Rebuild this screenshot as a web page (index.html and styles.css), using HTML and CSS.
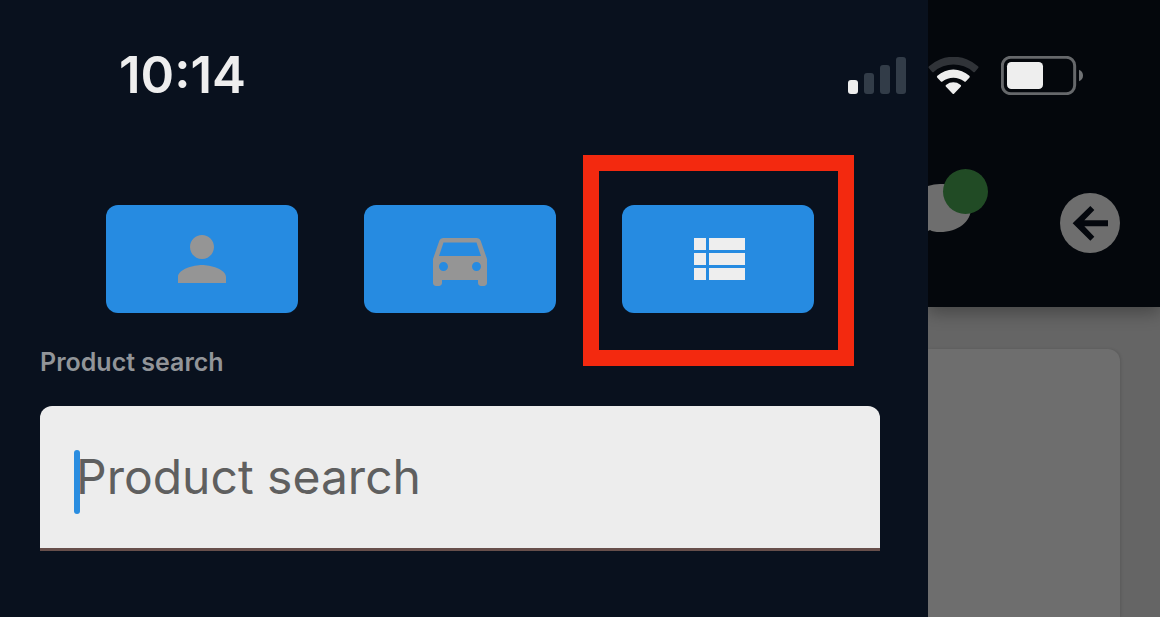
FILE: index.html
```html
<!DOCTYPE html>
<html lang="en">
<head>
<meta charset="utf-8">
<meta name="viewport" content="width=device-width, initial-scale=1">
<title>Product search</title>
<link rel="stylesheet" href="styles.css">
</head>
<body>
<div class="screen">
  <aside class="drawer">
    <nav class="tabs" aria-label="Search type">
      <button class="tab" type="button" aria-label="People">
        <svg class="tab-icon" viewBox="0 0 24 24"><path d="M12 12c2.210 0 4-1.790 4-4s-1.790-4-4-4-4 1.790-4 4 1.790 4 4 4zm0 2c-2.670 0-8 1.340-8 4v2h16v-2c0-2.660-5.330-4-8-4z"/></svg>
      </button>
      <button class="tab" type="button" aria-label="Vehicles">
        <svg class="tab-icon" viewBox="0 0 24 24"><path d="M18.920 6.010C18.720 5.420 18.160 5 17.500 5h-11c-.660 0-1.210.420-1.420 1.010L3 12v8c0 .550.450 1 1 1h1c.550 0 1-.450 1-1v-1h12v1c0 .550.450 1 1 1h1c.550 0 1-.450 1-1v-8l-2.080-5.990zM6.500 16c-.830 0-1.500-.670-1.500-1.500S5.670 13 6.500 13s1.500.670 1.500 1.500S7.330 16 6.500 16zm11 0c-.830 0-1.500-.670-1.500-1.500s.670-1.500 1.500-1.500 1.500.670 1.500 1.500-.670 1.500-1.500 1.500zM5 11l1.500-4.500h11L19 11H5z"/></svg>
      </button>
      <button class="tab tab-active" type="button" aria-label="Products">
        <svg class="tab-icon" viewBox="0 0 24 24"><path d="M4 14h4v-4H4v4zm0 5h4v-4H4v4zM4 9h4V5H4v4zm5 5h12v-4H9v4zm0 5h12v-4H9v4zM9 5v4h12V5H9z"/></svg>
        <span class="highlight"></span>
      </button>
    </nav>
    <label class="label" for="search">Product search</label>
    <div class="field">
      <input class="input" id="search" type="text" placeholder="Product search">
      <span class="caret"></span>
    </div>
  </aside>

  <main class="page">
    <header class="header">
      <button class="chat" type="button" aria-label="Messages">
        <svg class="chat-icon" viewBox="0 0 60 63">
          <path fill="#6e6e6e" d="M0 17Q6 15 12 15C30 15 43 25 43 39S30 63 12 63Q5 63 2 61L0 62Z"/>
          <circle cx="37.500" cy="22.500" r="22.500" fill="#214b25"/>
        </svg>
      </button>
      <button class="back" type="button" aria-label="Back">
        <svg class="back-icon" viewBox="480 128 180 180"><path fill="#04070d" d="M624 210H553L583 179L571 167L518 219L571 271L583 259L553 228H624Z"/></svg>
      </button>
    </header>
    <div class="content"><section class="card"></section></div>
  </main>

  <div class="status">
    <time class="time">10:14</time>
    <div class="indicators">
      <svg class="signal" viewBox="0 0 58 37">
        <rect x="0" y="23" width="10" height="14" rx="3" fill="#eee"/>
        <rect x="16" y="16" width="10" height="21" rx="3" fill="#323c48"/>
        <rect x="32" y="8" width="10" height="29" rx="3" fill="#323c48"/>
        <rect x="48" y="0" width="10" height="37" rx="3" fill="#323c48"/>
      </svg>
      <svg class="wifi" viewBox="294 51 153 111">
        <path fill="#303338" d="M297 85Q294 82 297 79A108 108 0 0 1 444 79Q447 82 444 85L435 95Q432 98 429 95A90 90 0 0 0 312 95Q309 98 306 95Z"/>
        <path fill="#eee" d="M322 113Q319 110 322 107A72 72 0 0 1 418 107Q421 110 418 113L408 124Q405 127 402 124A52 52 0 0 0 338 124Q335 127 332 124Z"/>
        <path fill="#eee" d="M348 140Q345 137 349 134A34 34 0 0 1 391 134Q395 137 392 140L372 161Q370 163 368 161Z"/>
      </svg>
      <svg class="battery" viewBox="513 48 246 117">
        <rect x="517" y="52" width="217" height="109" rx="25" fill="none" stroke="#66686b" stroke-width="9"/>
        <rect x="531" y="66" width="108" height="81" rx="13" fill="#eee"/>
        <path fill="#707275" d="M747 89Q759 94 759 106.500T747 124Z"/>
      </svg>
    </div>
  </div>
</div>
</body>
</html>
```
FILE: styles.css
```css
* {
  box-sizing: border-box;
}

body {
  margin: 0;
  font-family: Inter, "Liberation Sans", sans-serif;
}

button {
  border: 0;
  padding: 0;
  font: inherit;
}

svg {
  display: block;
}

.screen {
  display: grid;
  grid-template-columns: 4fr 1fr;
  min-height: 100vh;
  overflow: hidden;
}

.drawer {
  grid-area: 1 / 1;
  padding: 205px 48px 40px 40px;
  background: #09111e;
}

.tabs {
  display: flex;
  justify-content: space-evenly;
}

.tab {
  position: relative;
  display: flex;
  justify-content: center;
  width: 192px;
  padding: 18px 0;
  border-radius: 12px;
  background: #268be1;
  color: #959595;
}

.tab-active {
  color: #eee;
}

.tab-icon {
  width: 72px;
  height: 72px;
  fill: currentColor;
}

.highlight {
  position: absolute;
  inset: -50px -40px -53px -39px;
  border: 16px solid #f3290f;
}

.label {
  display: block;
  margin: 35px 0 30px;
  font-size: 25px;
  font-weight: 600;
  line-height: 28px;
  color: #929599;
}

.field {
  position: relative;
}

.input {
  display: block;
  width: 100%;
  height: 145px;
  padding: 38px 36px 40px;
  border: 0;
  border-bottom: 3px solid #674f4b;
  border-radius: 12px 12px 0 0;
  outline: 0;
  background: #ededed;
  font-family: inherit;
  font-size: 48px;
  line-height: 64px;
  color: #222;
}

.input::placeholder {
  color: #5f5f5f;
  opacity: 1;
}

.caret {
  position: absolute;
  top: 44px;
  left: 34px;
  width: 6px;
  height: 64px;
  border-radius: 3px;
  background: #2a8de0;
}

.page {
  grid-area: 1 / 2;
  display: flex;
  flex-direction: column;
  overflow: hidden;
  background: #656565;
}

.header {
  display: flex;
  align-items: flex-end;
  justify-content: space-between;
  padding: 169px 40px 54px 0;
  background: #04070c;
  box-shadow: 0 6px 16px rgba(0, 0, 0, 0.3);
}

.chat {
  margin-bottom: 21px;
  background: none;
}

.chat-icon {
  width: 60px;
  height: 63px;
}

.back {
  border-radius: 50%;
  background: #6e6e6e;
}

.back-icon {
  width: 60px;
  height: 60px;
}

.content {
  display: flex;
  flex: 1;
  padding: 42px 40px 0 0;
}

.card {
  flex: 1;
  border-radius: 0 12px 0 0;
  background: #6e6e6e;
  box-shadow: 1px 0 3px rgba(0, 0, 0, 0.12);
}

.status {
  grid-area: 1 / 1 / 2 / 3;
  z-index: 1;
  align-self: start;
  display: flex;
  align-items: center;
  justify-content: space-between;
  padding: 45px 77px 0 119px;
  pointer-events: none;
}

.time {
  font-size: 51px;
  font-weight: 600;
  line-height: 60px;
  color: #eee;
}

.indicators {
  display: flex;
  align-items: center;
  gap: 22px;
}

.signal {
  width: 58px;
  height: 37px;
}

.wifi {
  width: 51px;
  height: 37px;
}

.battery {
  width: 82px;
  height: 39px;
}
```
